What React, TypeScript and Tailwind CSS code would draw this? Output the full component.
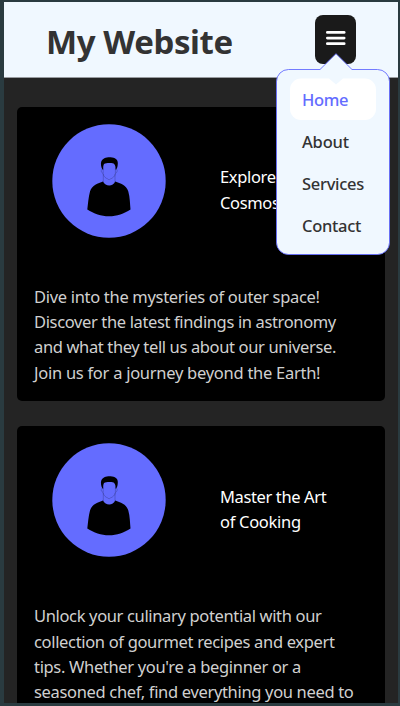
import React from "react";

type Line = { text: string; tracking: string };
type Post = { title: Line[]; body: Line[] };

const posts: Post[] = [
  {
    title: [
      { text: "Explore the", tracking: "tracking-[-0.35px]" },
      { text: "Cosmos", tracking: "tracking-[-0.35px]" },
    ],
    body: [
      { text: "Dive into the mysteries of outer space!", tracking: "tracking-[-0.31px]" },
      { text: "Discover the latest findings in astronomy", tracking: "tracking-[-0.36px]" },
      { text: "and what they tell us about our universe.", tracking: "tracking-[-0.36px]" },
      { text: "Join us for a journey beyond the Earth!", tracking: "tracking-[-0.27px]" },
    ],
  },
  {
    title: [
      { text: "Master the Art", tracking: "tracking-[-0.38px]" },
      { text: "of Cooking", tracking: "tracking-[-0.3px]" },
    ],
    body: [
      { text: "Unlock your culinary potential with our", tracking: "tracking-[-0.35px]" },
      { text: "collection of gourmet recipes and expert", tracking: "tracking-[-0.33px]" },
      { text: "tips. Whether you're a beginner or a", tracking: "tracking-[-0.33px]" },
      { text: "seasoned chef, find everything you need to", tracking: "tracking-[-0.33px]" },
    ],
  },
];

const links: Line[] = [
  { text: "Home", tracking: "tracking-[-0.35px]" },
  { text: "About", tracking: "tracking-[-0.2px]" },
  { text: "Services", tracking: "tracking-[-0.3px]" },
  { text: "Contact", tracking: "tracking-[-0.3px]" },
];

function Avatar() {
  return (
    <svg className="h-[114px] w-[114px] shrink-0" viewBox="0 0 114 114">
      <circle cx="57" cy="57" r="56.700" fill="#646cff" />
      <path
        d="M51 57.500C46 59.500 40 61 38 67.500C36.400 73.500 36 80 35.300 85.500C42 89.800 49 92.300 57 92.300C65 92.300 72 89.800 78.500 85.500C78 80 78 73.500 76.300 67.500C74.400 61 68.500 59.500 63.200 57.500C61 62.700 53.500 62.700 51 57.500Z"
        fill="#000"
      />
      <path
        d="M50.400 45.500C49.200 43.500 48.500 40 49.200 37.800C50.200 34.400 54.500 33.100 58.500 33.300C63 33.500 66 35.500 65.800 39.500C65.700 42 65.300 44 64.200 45.500H63.400C63.700 43 63.500 41.200 61.600 39.500C58.500 38.900 54.500 38.800 52 40C51 42 51.200 43.500 51.300 45.500Z"
        fill="#000"
      />
      <path
        d="M50.400 45.500C48.700 44.800 49 49 51 49.400M64.200 45.500C65.800 44.800 65.400 49 63.400 49.400M51.200 45V50C51.500 52.500 54 54.500 56 55L57 56L58.300 55C60.500 54.500 63 52 63.400 50V45M51.300 50V58M63 50V58"
        fill="none"
        stroke="#252863"
        strokeWidth="0.3"
      />
    </svg>
  );
}

function Card({ post }: { post: Post }) {
  return (
    <article className="h-[294px] shrink-0 rounded-[5px] bg-black pl-[17px] pt-[17px] text-[16.5px]">
      <div className="flex pl-[18px]">
        <Avatar />
        <h2 className="ml-[54px] pt-[40.4px] leading-[25.3px] text-white">
          {post.title.map((l) => (
            <span key={l.text} className={`block whitespace-nowrap ${l.tracking}`}>
              {l.text}
            </span>
          ))}
        </h2>
      </div>
      <p className="mt-[46px] leading-[25.2px] text-[#d0d0d0]">
        {post.body.map((l) => (
          <span key={l.text} className={`block whitespace-nowrap ${l.tracking}`}>
            {l.text}
          </span>
        ))}
      </p>
    </article>
  );
}

function Menu() {
  return (
    <nav className="absolute left-[276px] top-[53px] h-[203px] w-[114px]">
      <svg className="absolute inset-0 h-full w-full" viewBox="0 0 114 203">
        <path
          d="M12.5 16.5H44L60 .7L76 16.5H101.500A12 12 0 0 1 113.500 28.500V189.500A12 12 0 0 1 101.500 201.500H12.500A12 12 0 0 1 .5 189.500V28.500A12 12 0 0 1 12.500 16.500Z"
          fill="#f0f8ff"
          stroke="#646cff"
          strokeWidth="0.9"
        />
        <path
          d="M25 25.500H53L60 31.500L67 25.500H89A11 11 0 0 1 100 36.500V56A11 11 0 0 1 89 67H25A11 11 0 0 1 14 56V36.500A11 11 0 0 1 25 25.500Z"
          fill="#fff"
        />
      </svg>
      <ul className="relative flex flex-col pl-[26px] pt-[26px] text-[16.5px] font-medium text-[#333]">
        {links.map((l, i) => (
          <li
            key={l.text}
            className={`h-[42px] whitespace-nowrap leading-[42px] ${l.tracking} ${i === 0 ? "text-[#646cff]" : ""}`}
          >
            {l.text}
          </li>
        ))}
      </ul>
    </nav>
  );
}

export default function App() {
  return (
    <div className="relative h-[706px] w-[400px] overflow-hidden bg-[#2a3b40] pb-[3px] pl-[4px] pr-[2px] pt-[2px] font-['Noto_Sans','Open_Sans',sans-serif]">
      <div className="flex h-full flex-col overflow-hidden bg-[#242424]">
        <header className="flex h-[76px] shrink-0 items-start justify-between border-b border-[#999ca0] bg-[#f0f8ff] pl-[42px] pr-[42px] pt-[13px]">
          <h1 className="whitespace-nowrap pt-[5px] text-[33px] font-bold leading-[44px] tracking-[-0.4px] text-[#333]">
            My Website
          </h1>
          <button className="flex h-[49px] w-[41px] items-start justify-center rounded-[8px] bg-[#1a1a1a] pt-[16px]">
            <svg width="20" height="16" viewBox="0 0 20 16" fill="#fff">
              <rect x="0" y=".1" width="19.500" height="2.700" rx="1.300" />
              <rect x="0" y="5.700" width="19.500" height="2.700" rx="1.300" />
              <rect x="0" y="11.300" width="19.500" height="2.700" rx="1.300" />
            </svg>
          </button>
        </header>
        <main className="flex flex-col gap-[25.3px] pl-[13px] pr-[13px] pt-[29px]">
          {posts.map((p) => (
            <Card key={p.title[0].text} post={p} />
          ))}
        </main>
      </div>
      <Menu />
    </div>
  );
}
